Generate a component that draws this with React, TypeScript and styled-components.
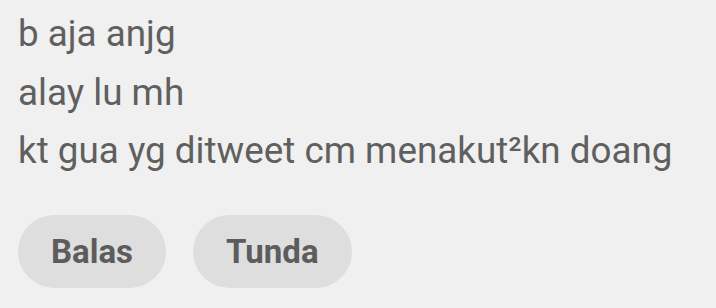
import styled, { createGlobalStyle } from "styled-components";

const GlobalStyle = createGlobalStyle`
  html, body {
    margin: 0;
    padding: 0;
    background: #f0f0f0;
  }
`;

const Wrapper = styled.section`
  font-family: Roboto, "Noto Sans", sans-serif;
  padding: 5px 18px 0;
  display: flex;
  flex-direction: column;
`;

const Messages = styled.div`
  display: flex;
  flex-direction: column;
`;

const Line = styled.div`
  font-size: 36.8px;
  line-height: 58.5px;
  color: #5f5f5f;
  white-space: nowrap;
`;

const Actions = styled.div`
  display: flex;
  gap: 27px;
  margin-top: 34px;
`;

const Pill = styled.button`
  height: 73px;
  padding: 0 33px;
  border: none;
  border-radius: 37px;
  background: #dedede;
  color: #5c5c5c;
  font-family: Roboto, "Noto Sans", sans-serif;
  font-size: 33px;
  font-weight: 700;
`;

const lines = ["b aja anjg", "alay lu mh", "kt gua yg ditweet cm menakut²kn doang"];

export default function App() {
  return (
    <>
      <GlobalStyle />
      <Wrapper>
        <Messages>
          {lines.map((l) => (
            <Line key={l}>{l}</Line>
          ))}
        </Messages>
        <Actions>
          <Pill>Balas</Pill>
          <Pill>Tunda</Pill>
        </Actions>
      </Wrapper>
    </>
  );
}
